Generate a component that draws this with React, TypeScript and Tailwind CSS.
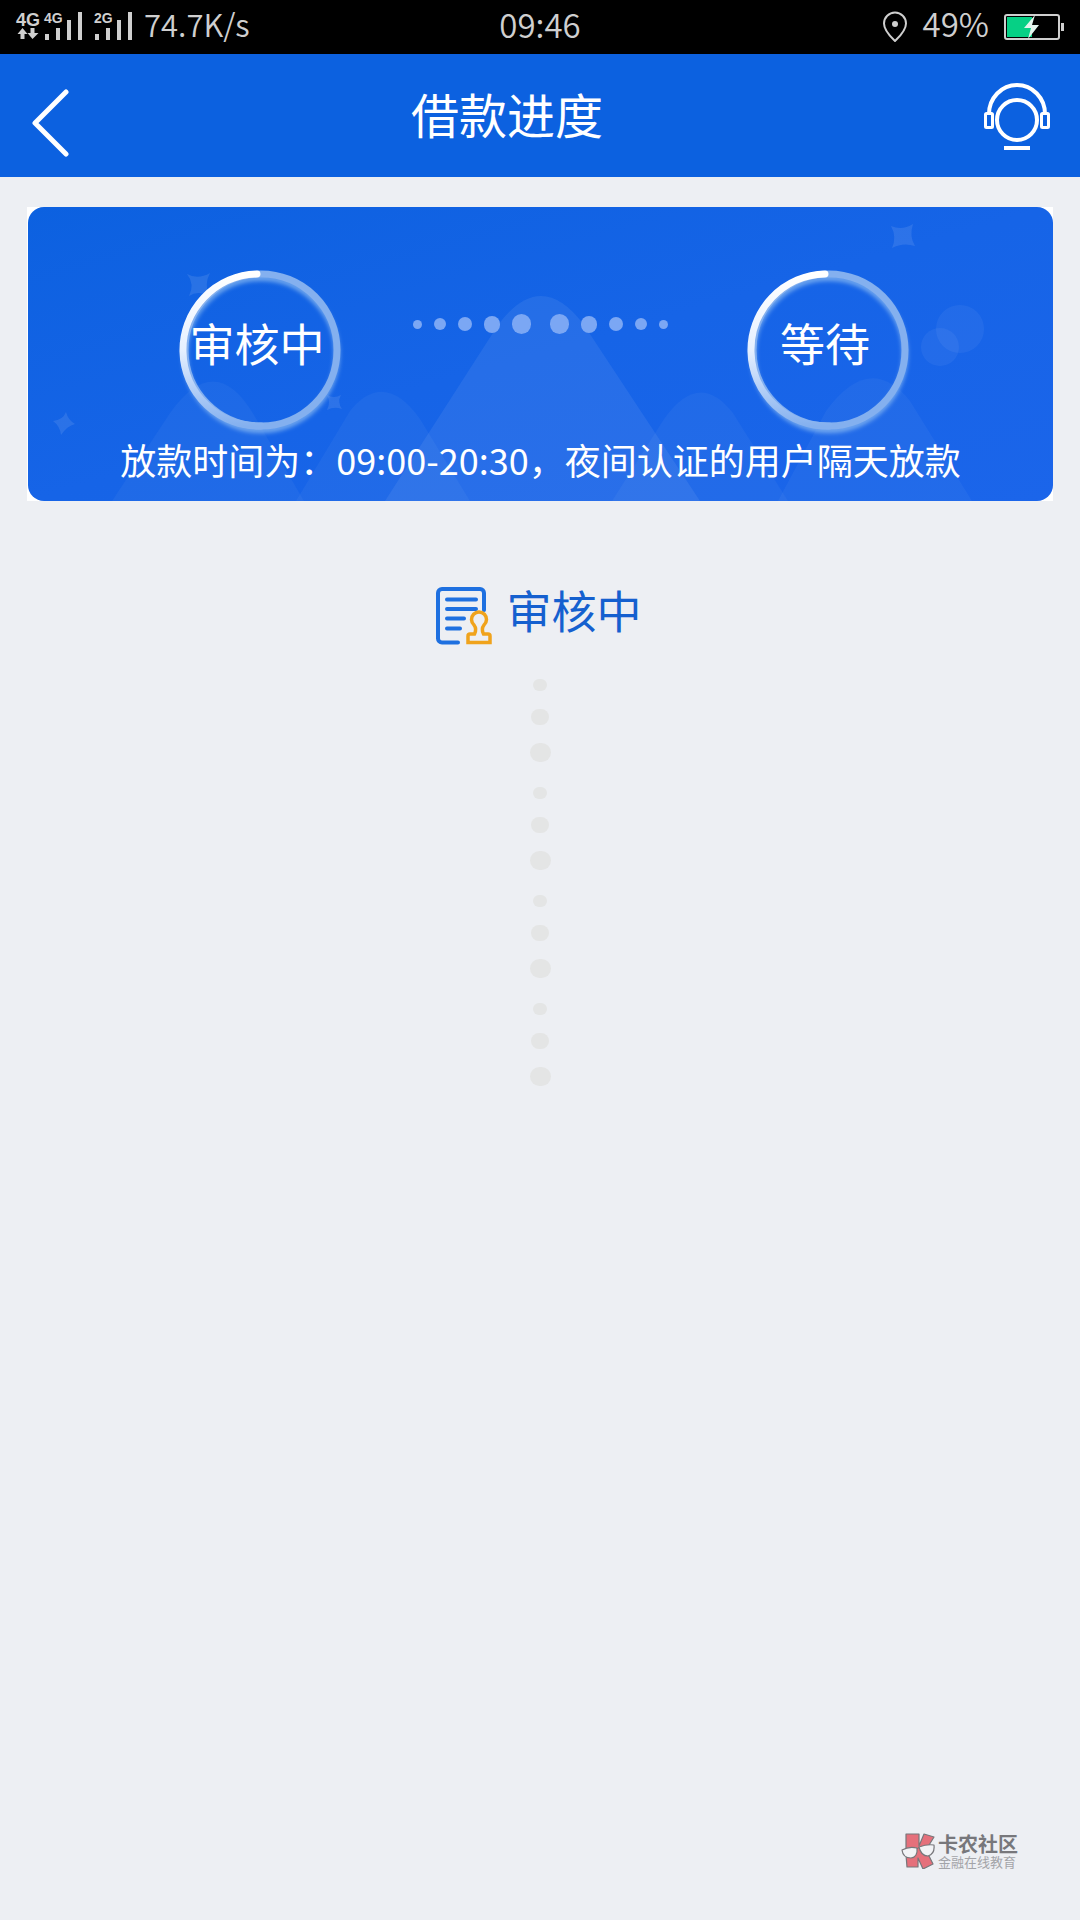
import type { ReactNode } from 'react'

const STEP_DOTS = [
  'w-[9px] h-[9px]',
  'w-[12px] h-[12px]',
  'w-[14px] h-[14px]',
  'w-[16px] h-[17px]',
  'w-[19px] h-[20px]',
]

function SignalIcons() {
  return (
    <svg width="118" height="36" viewBox="0 -4 118 36" className="overflow-visible" fill="#cfcfcf" fontFamily="Liberation Sans, sans-serif" fontWeight="700" aria-hidden="true">
      <text x="0" y="13" fontSize="18">4G</text>
      <path d="M6.500 15l5 6h-3v5h-4v-5h-3zM16.500 26l-5-6h3v-5h4v5h4z" />
      <text x="28" y="10" fontSize="14">4G</text>
      <path d="M29 21h4v6h-4zM40 15h4v12h-4zM51 7h4v20h-4zM62 -1h4v28h-4z" />
      <text x="78" y="10" fontSize="14">2G</text>
      <path d="M79 21h4v6h-4zM90 15h4v12h-4zM101 7h4v20h-4zM112 -1h4v28h-4z" />
    </svg>
  )
}

function StatusBar() {
  return (
    <div className="grid h-[54px] grid-cols-3 items-center bg-black px-4 text-[33px] leading-[44px] font-[350] text-[#cfcfcf]">
      <div className="flex items-center gap-[10px]">
        <SignalIcons />
        <span className="pb-[6px] text-[31px]">74.7K/s</span>
      </div>
      <span className="pb-[6px] text-center">09:46</span>
      <div className="flex items-center justify-end gap-[15px]">
        <svg width="26" height="32" viewBox="0 0 26 32" fill="none" aria-hidden="true">
          <path d="M13 30C10 27 2 20 2 12.500A11 11 0 0 1 24 12.500C24 20 16 27 13 30z" stroke="#cfcfcf" strokeWidth="2" strokeLinejoin="round" />
          <circle cx="13" cy="13" r="3" fill="#cfcfcf" />
        </svg>
        <span className="pb-[8px]">49%</span>
        <svg width="60" height="28" viewBox="0 0 60 28" aria-hidden="true">
          <rect x="1" y="2" width="54" height="24" rx="2" fill="none" stroke="#cfcfcf" strokeWidth="2" />
          <rect x="3" y="4" width="25" height="20" fill="#06d085" />
          <rect x="57" y="10" width="3" height="8" fill="#cfcfcf" />
          <path d="M31 2L20 15h7l-3 11 11-14h-7z" fill="#e4f5ee" />
        </svg>
      </div>
    </div>
  )
}

function Header() {
  return (
    <header className="flex h-[123px] items-center bg-[#0c61e0] text-white">
      <button type="button" aria-label="返回" className="flex h-full w-[84px] items-center pt-[14px] pl-[32px]">
        <svg width="38" height="68" viewBox="0 0 38 68" fill="none" stroke="currentColor" strokeWidth="5" strokeLinecap="round" strokeLinejoin="round">
          <path d="M34 3L3 34 34 65" />
        </svg>
      </button>
      <h1 className="flex-1 pb-[6px] text-center text-[48px] leading-[64px]">借款进度</h1>
      <button type="button" aria-label="客服" className="flex h-full w-[150px] items-center justify-end pt-[2px] pr-[30px]">
        <svg width="66" height="68" viewBox="0 0 66 68" fill="none" stroke="currentColor" strokeWidth="4">
          <circle cx="33" cy="37" r="20" />
          <path d="M5 31a28 29 0 0 1 56 0" />
          <rect x="1.500" y="30.500" width="7" height="14" rx="1" strokeWidth="3" />
          <rect x="57.500" y="30.500" width="7" height="14" rx="1" strokeWidth="3" />
          <path d="M20 65h26" />
        </svg>
      </button>
    </header>
  )
}

function BannerBackground() {
  return (
    <svg className="absolute inset-0 h-full w-full" viewBox="0 0 1025 294" preserveAspectRatio="none" fill="#fff" aria-hidden="true">
      <g fillOpacity="0.04">
        <path d="M84 294L142 206Q187 142 226 208L276 294z" />
        <path d="M268 294L322 204Q356 162 392 212L442 294z" />
        <path d="M584 294L636 212Q671 162 705 206L760 294z" />
        <path d="M750 294L798 204Q842 144 882 194L944 294z" />
      </g>
      <path fillOpacity="0.07" d="M357 294L470 118Q513 60 556 118L672 294z" />
      <g fillOpacity="0.1">
        <path d="M159 67Q170 73 182 66Q176 77 181 89Q170 83 161 89Q167 77 159 67z" />
        <path d="M38 205Q40 213 47 217Q39 219 33 228Q32 219 25 214Q35 213 38 205z" />
        <path d="M299 188Q306 192 313 188Q309 195 314 202Q306 199 299 203Q303 195 299 188z" />
        <path d="M863 19Q874 24 885 17Q881 29 887 39Q875 35 864 41Q869 30 863 19z" />
      </g>
      <g fillOpacity="0.05">
        <circle cx="932" cy="122" r="24" />
        <circle cx="912" cy="140" r="19" />
      </g>
    </svg>
  )
}

function ProgressRing({ id, children }: { id: string; children: ReactNode }) {
  return (
    <div className="relative flex h-[160px] w-[160px] shrink-0 items-center justify-center">
      <svg className="absolute inset-0 overflow-visible" width="160" height="160" viewBox="0 0 160 160" fill="none" aria-hidden="true">
        <defs>
          <linearGradient id={id} x1="0" y1="0" x2="0" y2="1">
            <stop offset="0" stopColor="#fff" />
            <stop offset="0.5" stopColor="#e6f0ff" />
            <stop offset="1" stopColor="#84b0ef" />
          </linearGradient>
          <filter id={`${id}-glow`} x="-20%" y="-20%" width="140%" height="140%">
            <feGaussianBlur stdDeviation="2" />
          </filter>
        </defs>
        <circle cx="80" cy="84" r="76" stroke="#8fbdf2" strokeOpacity="0.75" strokeWidth="6" filter={`url(#${id}-glow)`} />
        <circle cx="80" cy="80" r="76" stroke="#84b0ef" strokeWidth="7" />
        <path d="M76 4A76 76 0 0 0 80 156" stroke={`url(#${id})`} strokeWidth="7" strokeLinecap="round" />
      </svg>
      <span className="relative pr-2 pb-[14px] text-[45px] leading-[56px] whitespace-nowrap">{children}</span>
    </div>
  )
}

function Banner() {
  return (
    <section className="bg-white pl-px">
      <div className="relative overflow-hidden rounded-2xl bg-linear-to-br from-[#0c61e0] via-[#1664e7] to-[#1b65ea] pt-[63px] pb-[22px] text-white">
        <BannerBackground />
        <div className="relative flex pr-[144px] pl-[153px]">
          <ProgressRing id="ring-review">审核中</ProgressRing>
          <div className="flex flex-1 items-center justify-center gap-[19px] pr-[10px] pb-[52px]">
            <div className="flex items-center gap-[12px]">
              {STEP_DOTS.map(size => (
                <span key={size} className={`${size} rounded-full bg-[#7ba7f4]`} />
              ))}
            </div>
            <div className="flex flex-row-reverse items-center gap-[12px]">
              {STEP_DOTS.map(size => (
                <span key={size} className={`${size} rounded-full bg-[#7ba7f4]`} />
              ))}
            </div>
          </div>
          <ProgressRing id="ring-wait">等待</ProgressRing>
        </div>
        <p className="relative mt-[9px] text-center text-[36px] leading-[40px] whitespace-nowrap">
          放款时间为：09:00-20:30，夜间认证的用户隔天放款
        </p>
      </div>
    </section>
  )
}

function ReviewIcon() {
  return (
    <svg width="56" height="58" viewBox="0 0 56 58" fill="none" strokeLinecap="round" strokeLinejoin="round" aria-hidden="true">
      <g stroke="#1e70e0" strokeWidth="4">
        <path d="M22 55.500H6a4 4 0 0 1-4-4V6a4 4 0 0 1 4-4h38a4 4 0 0 1 4 4v17" />
        <path d="M11 12.500h29M11 22h29M11 31.500h17M11 41.500h13" />
      </g>
      <path
        stroke="#f0a31c"
        strokeWidth="3.500"
        strokeLinejoin="miter"
        d="M32 55.500V49q0-2 2-2h4.500q2.500-5-.5-9a7.500 7.500 0 1 1 10 0q-3 4-.5 9H52q2 0 2 2v6.500z"
      />
    </svg>
  )
}

function StageTrail() {
  return (
    <div className="flex flex-col items-center gap-[25px]">
      {[0, 1, 2, 3].map(i => (
        <div key={i} className="flex flex-col items-center">
          <span className="h-[12px] w-[14px] rounded-full bg-[#e4e5e5]" />
          <span className="mt-[18px] h-[16px] w-[18px] rounded-full bg-[#e4e5e5]" />
          <span className="mt-[18px] h-[19px] w-[21px] rounded-full bg-[#e4e5e5]" />
        </div>
      ))}
    </div>
  )
}

function Brand() {
  return (
    <footer className="mt-auto flex items-center justify-end gap-[3px] pr-[62px] pb-[51px]">
      <svg width="34" height="36" viewBox="0 0 34 36" strokeLinejoin="round" aria-hidden="true">
        <path d="M5 1h13v12L23 1l10 3-8 13 7 14-10 5-5-11v9H6L5 22z" fill="#e5707b" stroke="#77777b" strokeWidth="1.200" />
        <g fill="#f2f3f6" stroke="#77777b" strokeWidth="1.200">
          <path d="M1 17Q8 13 16 15Q17 24 10 25Q2 25 1 17z" />
          <path d="M18 14Q26 11 33 12Q34 21 27 23Q20 23 18 14z" />
        </g>
        <path d="M16 16q1-2 2-1" fill="none" stroke="#77777b" />
      </svg>
      <div>
        <p className="text-[20px] leading-[22px] font-bold text-[#77777b]">卡农社区</p>
        <p className="text-[13px] leading-[14px] text-[#a3a4a8]">金融在线教育</p>
      </div>
    </footer>
  )
}

export default function App() {
  return (
    <div className="flex min-h-screen flex-col bg-[#edeff3] font-['Noto_Sans_CJK_SC',sans-serif]">
      <StatusBar />
      <Header />
      <main className="px-[27px] pt-[30px]">
        <Banner />
        <div className="mt-[84px] mb-[32px] flex items-center justify-center gap-[14px] pr-[2px] text-[#1560cf]">
          <ReviewIcon />
          <h2 className="pb-[12px] text-[45px] leading-[50px]">审核中</h2>
        </div>
        <StageTrail />
      </main>
      <Brand />
    </div>
  )
}
